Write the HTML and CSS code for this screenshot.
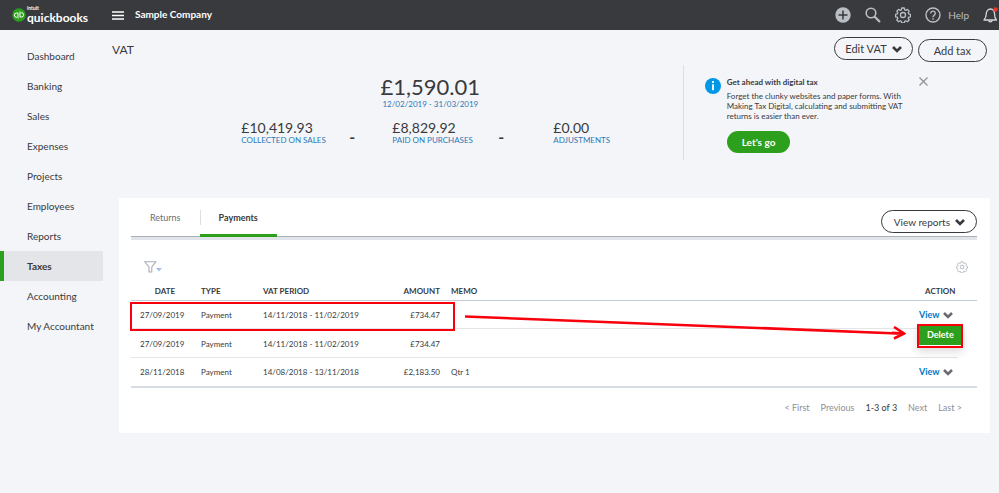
FILE: index.html
```html
<!DOCTYPE html>
<html lang="en">

<head>
    <meta charset="UTF-8">
    <meta name="viewport" content="width=device-width, initial-scale=1.0">
    <title>VAT - QuickBooks</title>
    <link rel="stylesheet" href="styles.css">
</head>

<body>
    <svg class="defs" width="0" height="0" aria-hidden="true">
        <symbol id="chevron" viewBox="0 0 10 8">
            <path d="M1 2l4 4 4-4" fill="none" stroke="currentColor" stroke-width="2.6" />
        </symbol>
        <symbol id="gear" viewBox="0 0 24 24">
            <path d="M9.9 1.5h4.2l.7 3 1.8.8 2.7-1.6 3 3-1.6 2.700.7 1.800 3 .7v4.200l-3 .7-.7 1.800 1.600 2.700-3 3-2.700-1.600-1.800.8-.7 3H9.900l-.7-3-1.800-.8-2.700 1.600-3-3 1.600-2.700-.7-1.800-3-.7v-4.200l3-.7.7-1.800-1.600-2.700 3-3 2.700 1.600 1.800-.8z" transform="translate(1.200 .2) scale(.9)" fill="none" stroke="currentColor" stroke-width="2.200" stroke-linejoin="round" />
            <circle cx="12" cy="12" r="3.800" fill="none" stroke="currentColor" stroke-width="2" />
        </symbol>
    </svg>

    <header class="topbar">
        <a class="brand" href="#">
            <svg width="14" height="14" viewBox="0 0 28 28" aria-hidden="true">
                <circle cx="14" cy="14" r="13.5" fill="#2ca01c" />
                <g fill="none" stroke="#fff" stroke-width="2">
                    <path d="M12 21V10H9a4 4 0 0 0 0 8.500h1" />
                    <path d="M16 7v11h3a4 4 0 0 0 0-8.500h-1" />
                </g>
            </svg>
            <span class="brand-text">
                <span class="brand-top">intuit</span>
                <span class="brand-name">quickbooks</span>
            </span>
        </a>
        <button class="icon-btn menu-btn" aria-label="Menu">
            <svg width="12" height="9" viewBox="0 0 12 9">
                <path d="M0 1h12M0 4.500h12M0 8h12" stroke="#fff" stroke-width="1.300" />
            </svg>
        </button>
        <span class="company">Sample Company</span>
        <div class="tools">
            <button class="icon-btn" aria-label="Create">
                <svg width="16" height="16" viewBox="0 0 16 16">
                    <circle cx="8" cy="8" r="7.700" fill="#babec5" />
                    <path d="M8 3.500v9M3.500 8h9" stroke="#393a3d" stroke-width="1.500" />
                </svg>
            </button>
            <button class="icon-btn" aria-label="Search">
                <svg width="16" height="16" viewBox="0 0 16 16" fill="none" stroke="#babec5">
                    <circle cx="6" cy="6" r="4.800" stroke-width="1.600" />
                    <path d="M9.500 9.500l5.500 5.500" stroke-width="2.200" />
                </svg>
            </button>
            <button class="icon-btn" aria-label="Settings">
                <svg width="16" height="16"><use href="#gear" /></svg>
            </button>
            <button class="icon-btn help-btn">
                <svg width="16" height="16" viewBox="0 0 16 16" fill="none" stroke="#babec5" stroke-width="1.400" aria-hidden="true">
                    <circle cx="8" cy="8" r="7" />
                    <path d="M5.700 6.500a2.300 2.300 0 1 1 3.500 1.900c-.8.500-1.200.8-1.200 1.800M8 11.300v1.400" />
                </svg>
                Help
            </button>
            <button class="icon-btn" aria-label="Notifications">
                <svg width="16" height="16" viewBox="0 0 16 16" fill="none" stroke="#d4d7dc" stroke-width="1.300">
                    <path d="M1 13h12.500c-1.500-1.500-2-3-2-6.500 0-2.500-1.500-4.500-4-4.500S3.300 4 3.300 6.500C3.300 10 2.500 11.500 1 13z" stroke-linejoin="round" />
                    <path d="M5.500 13.500a2 2 0 0 0 3.800 0" />
                    <circle cx="12.500" cy="2.500" r="2.300" fill="#e8352e" stroke="none" />
                </svg>
            </button>
        </div>
    </header>

    <div class="layout">
        <nav class="sidebar">
            <a href="#">Dashboard</a>
            <a href="#">Banking</a>
            <a href="#">Sales</a>
            <a href="#">Expenses</a>
            <a href="#">Projects</a>
            <a href="#">Employees</a>
            <a href="#">Reports</a>
            <a class="active" href="#">Taxes</a>
            <a href="#">Accounting</a>
            <a href="#">My Accountant</a>
        </nav>

        <main class="content">
            <div class="page-head">
                <h1>VAT</h1>
                <button class="pill">Edit VAT <svg width="10" height="8"><use href="#chevron" /></svg></button>
                <button class="pill pill-add">Add tax</button>
            </div>

            <section class="overview">
                <div class="summary">
                    <div class="total">£1,590.01</div>
                    <a class="period" href="#">12/02/2019 - 31/03/2019</a>
                    <div class="figures">
                        <div>
                            <div class="amount">£10,419.93</div>
                            <a href="#">COLLECTED ON SALES</a>
                        </div>
                        <span class="minus">-</span>
                        <div>
                            <div class="amount">£8,829.92</div>
                            <a href="#">PAID ON PURCHASES</a>
                        </div>
                        <span class="minus">-</span>
                        <div>
                            <div class="amount">£0.00</div>
                            <a href="#">ADJUSTMENTS</a>
                        </div>
                    </div>
                </div>
                <aside class="promo">
                    <svg class="info" width="16" height="16" viewBox="0 0 16 16" aria-hidden="true">
                        <circle cx="8" cy="8" r="8" fill="#0097e6" />
                        <path d="M8 3v2M8 6.300v6" stroke="#fff" stroke-width="1.800" />
                    </svg>
                    <div class="promo-body">
                        <h2>Get ahead with digital tax</h2>
                        <p>Forget the clunky websites and paper forms. With Making Tax Digital, calculating and submitting VAT returns is easier than ever.</p>
                        <button class="go">Let's go</button>
                    </div>
                    <button class="icon-btn close" aria-label="Close">
                        <svg width="9" height="9" viewBox="0 0 9 9">
                            <path d="M.5.5l8 8M8.500.5l-8 8" stroke="#8d9096" stroke-width="1.200" />
                        </svg>
                    </button>
                </aside>
            </section>

            <section class="panel">
                <div class="tabs">
                    <button class="tab">Returns</button>
                    <button class="tab selected">Payments</button>
                    <button class="pill reports">View reports <svg width="10" height="8"><use href="#chevron" /></svg></button>
                </div>

                <div class="table-tools">
                    <button class="icon-btn" aria-label="Filter">
                        <svg width="18" height="12" viewBox="0 0 18 12">
                            <path d="M.8.8h11L7.800 6v5H5V6z" fill="none" stroke="#a9aeb8" stroke-width="1.100" />
                            <path d="M12 7h6l-3 3.500z" fill="#a3c1e8" />
                        </svg>
                    </button>
                    <button class="icon-btn" aria-label="Table settings">
                        <svg width="12" height="12"><use href="#gear" /></svg>
                    </button>
                </div>

                <table class="payments">
                    <colgroup>
                        <col class="c-date">
                        <col class="c-type">
                        <col class="c-period">
                        <col class="c-amount">
                        <col>
                        <col class="c-action">
                    </colgroup>
                    <thead>
                        <tr>
                            <th class="center">DATE</th>
                            <th>TYPE</th>
                            <th>VAT PERIOD</th>
                            <th class="num">AMOUNT</th>
                            <th>MEMO</th>
                            <th class="action-head">ACTION</th>
                        </tr>
                    </thead>
                    <tbody>
                        <tr>
                            <td>27/09/2019</td>
                            <td>Payment</td>
                            <td>14/11/2018 - 11/02/2019</td>
                            <td class="num">£734.47</td>
                            <td></td>
                            <td>
                                <div class="action">
                                    <a href="#">View</a>
                                    <button class="icon-btn" aria-label="More actions"><svg width="10" height="8"><use href="#chevron" /></svg></button>
                                    <div class="menu"><button>Delete</button></div>
                                </div>
                            </td>
                        </tr>
                        <tr>
                            <td>27/09/2019</td>
                            <td>Payment</td>
                            <td>14/11/2018 - 11/02/2019</td>
                            <td class="num">£734.47</td>
                            <td></td>
                            <td></td>
                        </tr>
                        <tr>
                            <td>28/11/2018</td>
                            <td>Payment</td>
                            <td>14/08/2018 - 13/11/2018</td>
                            <td class="num">£2,183.50</td>
                            <td>Qtr 1</td>
                            <td>
                                <div class="action">
                                    <a href="#">View</a>
                                    <button class="icon-btn" aria-label="More actions"><svg width="10" height="8"><use href="#chevron" /></svg></button>
                                </div>
                            </td>
                        </tr>
                    </tbody>
                </table>

                <div class="pager">
                    <a href="#">&lt; First</a>
                    <a href="#">Previous</a>
                    <span>1-3 of 3</span>
                    <a href="#">Next</a>
                    <a href="#">Last &gt;</a>
                </div>

                <!-- callout: payment row to its Delete action -->
                <div class="mark-row"></div>
                <div class="mark-arrow">
                    <svg class="shaft" viewBox="0 0 430 20" preserveAspectRatio="none">
                        <path d="M0 1.500L430 18.500" />
                    </svg>
                    <svg class="tip" width="14" height="14" viewBox="0 0 14 14">
                        <path d="M2 1L12 7.500 2 12.500M12 7.500L0 6.800" />
                    </svg>
                </div>
            </section>
        </main>
    </div>
</body>

</html>
```

FILE: styles.css
```css
* {
    box-sizing: border-box;
}

body {
    margin: 0;
    background-color: #f4f5f8;
    color: #393a3d;
    font-family: Lato, "Open Sans", sans-serif;
    font-size: 10px;
    line-height: 12px;
}

a {
    color: inherit;
    text-decoration: none;
}

button {
    font: inherit;
    color: inherit;
    cursor: pointer;
}

h1, h2, p {
    margin: 0;
}

.defs {
    position: absolute;
}

.icon-btn {
    display: flex;
    align-items: center;
    padding: 0;
    border: 0;
    background: none;
}

/* top bar */
.topbar {
    display: flex;
    align-items: center;
    height: 30px;
    padding-left: 12px;
    background-color: #393a3d;
    color: #fff;
}

.brand {
    display: flex;
    align-items: center;
    gap: 1px;
    width: 100px;
}

.brand-text {
    display: flex;
    flex-direction: column;
    font-weight: bold;
}

.brand-top {
    font-size: 5px;
    line-height: 5px;
}

.brand-name {
    font-size: 12px;
    line-height: 13px;
}

.company {
    margin-left: 11px;
    font-weight: bold;
    line-height: 14px;
    padding-bottom: 2px;
}

.tools {
    display: flex;
    align-items: center;
    gap: 14px;
    margin-left: auto;
    color: #babec5;
}

.help-btn {
    gap: 7px;
}

/* side navigation */
.layout {
    display: flex;
    align-items: flex-start;
}

.sidebar {
    display: flex;
    flex-direction: column;
    width: 103px;
    padding-top: 11px;
    flex-shrink: 0;
}

.sidebar a {
    height: 30px;
    padding-left: 23px;
    border-left: 4px solid transparent;
    line-height: 30px;
}

.sidebar .active {
    border-color: #2ca01c;
    background-color: #e3e5e8;
    font-weight: bold;
}

.content {
    flex: 1;
    padding: 7px 9px 0;
}

/* page heading */
.page-head {
    display: flex;
    align-items: flex-start;
    gap: 5px;
    padding-right: 3px;
}

.page-head h1 {
    flex: 1;
    font-size: 12px;
    font-weight: normal;
    line-height: 26px;
}

.pill {
    display: flex;
    align-items: center;
    justify-content: center;
    gap: 5px;
    height: 23px;
    padding: 0 10px;
    border: 1px solid #393a3d;
    border-radius: 12px;
    background: none;
    font-size: 11px;
    white-space: nowrap;
}

.pill-add {
    margin-top: 2px;
    padding: 0 15px;
}

/* VAT summary */
.overview {
    display: grid;
    grid-template-columns: 65fr 35fr;
    margin-top: 2px;
}

.summary {
    display: flex;
    flex-direction: column;
    align-items: center;
    padding: 10px 0 0 66px;
}

.total {
    font-size: 22px;
    line-height: 24px;
}

.summary a {
    color: #2c78b5;
    font-size: 8px;
    line-height: 11px;
}

.figures {
    display: grid;
    grid-template-columns: 108px 43px 106px 55px 66px;
    margin-top: 10px;
}

.figures a {
    display: block;
    white-space: nowrap;
}

.amount {
    font-size: 14px;
    line-height: 15px;
}

.minus {
    align-self: end;
    font-size: 16px;
    font-weight: bold;
    line-height: 18px;
}

.promo {
    display: flex;
    align-items: flex-start;
    min-height: 95px;
    padding: 12px 62px 0 21px;
    border-left: 1px solid #dcdee3;
}

.info {
    flex-shrink: 0;
    margin: 1px 6px 0 0;
}

.promo-body {
    flex: 1;
    font-size: 8px;
    line-height: 10px;
}

.promo h2 {
    margin-bottom: 4px;
    font-size: 8px;
    line-height: 10px;
}

.promo p {
    max-width: 184px;
}

.go {
    height: 22px;
    margin-top: 10px;
    padding: 0 15px;
    border: 0;
    border-radius: 11px;
    background-color: #2ca01c;
    color: #fff;
    font-size: 10px;
    font-weight: bold;
}

/* payments panel */
.panel {
    position: relative;
    margin: 38px 0 0 7px;
    padding: 0 13px 19px 12px;
    background-color: #fff;
}

.tabs {
    display: flex;
    height: 42px;
    border-bottom: 3px solid #e1e4e9;
    box-shadow: inset 0 -1px #a9b2bc;
}

.tab {
    display: flex;
    align-items: center;
    height: 39px;
    padding: 3px 19px 0;
    border: 0;
    border-bottom: 3px solid transparent;
    background: none;
    color: #6b6c72;
    font-size: 9px;
}

.selected {
    border-color: #2ca01c;
    background: linear-gradient(#dcdee3, #dcdee3) 0 12px / 1px 15px no-repeat;
    color: #393a3d;
    font-weight: bold;
}

.reports {
    margin: 12px 0 0 auto;
    padding: 0 11px 0 12px;
    font-size: 10px;
}

.table-tools {
    display: flex;
    justify-content: space-between;
    align-items: center;
    padding: 21px 9px 9px 13px;
    color: #babec5;
}

.payments {
    width: 100%;
    border-collapse: collapse;
    table-layout: fixed;
    font-size: 8px;
}

.c-date {
    width: 61px;
}

.c-type {
    width: 62px;
}

.c-period {
    width: 128px;
}

.c-amount {
    width: 60px;
}

.c-action {
    width: 67px;
}

.payments th, .payments td {
    height: 29px;
    padding: 0 2px 0 9px;
    text-align: left;
    white-space: nowrap;
}

.payments th {
    height: 18px;
    border-bottom: 1px solid #c3ccd5;
}

.payments .num {
    text-align: right;
}

.payments .center {
    text-align: center;
}

.payments .action-head {
    padding-left: 15px;
}

.payments tbody tr {
    background: linear-gradient(#e3e5e8, #e3e5e8) 0 100% / calc(100% - 19px) 1px no-repeat;
}

.payments tbody tr:last-child {
    background: none;
    border-bottom: 2px solid #d8dde3;
}

.action {
    position: relative;
    display: flex;
    align-items: center;
    gap: 3px;
    color: #6b6c72;
}

.action a {
    color: #0077c5;
    font-size: 9px;
    font-weight: bold;
}

.menu {
    position: absolute;
    top: 15px;
    left: -2px;
    z-index: 1;
    border: 2px solid #f8000c;
    background-color: #fff;
    box-shadow: 0 4px 8px #0002;
}

.menu button {
    display: block;
    height: 19px;
    margin-bottom: 1px;
    padding: 0 7px 0 8px;
    border: 0;
    background-color: #2ca01c;
    color: #fff;
    font-size: 9px;
    font-weight: bold;
}

.pager {
    display: flex;
    justify-content: flex-end;
    gap: 11px;
    padding: 14px 15px 0 0;
    color: #8d9096;
    font-size: 9px;
}

.pager span {
    color: #393a3d;
}

/* callout */
.mark-row {
    position: absolute;
    top: 104px;
    left: 11px;
    width: 325px;
    height: 29px;
    border: 2px solid #f8000c;
}

.mark-arrow {
    position: absolute;
    top: 117px;
    left: 346px;
    right: 84px;
    height: 26px;
}

.mark-arrow path {
    fill: none;
    stroke: #f8000c;
    stroke-width: 2.6;
}

.shaft {
    display: block;
    width: calc(100% - 8px);
    height: 20px;
}

.tip {
    position: absolute;
    right: 0;
    bottom: 1px;
}
```
